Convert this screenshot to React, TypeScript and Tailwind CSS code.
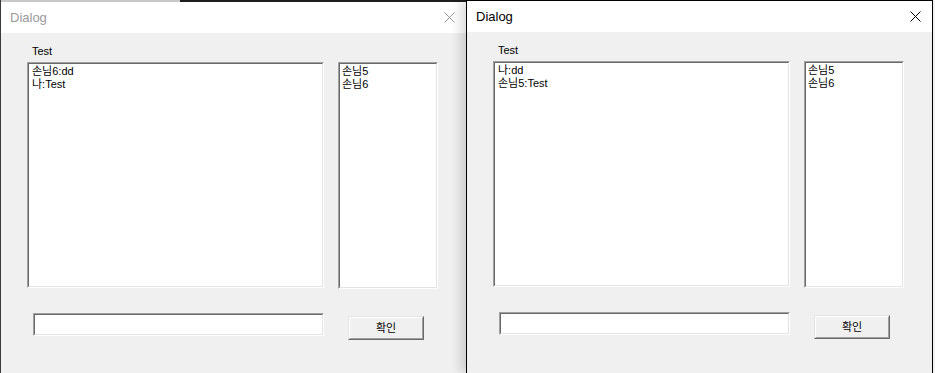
import clsx from 'clsx';

interface DialogWindowProps {
    active: boolean;
    messages: string[];
    guests: string[];
    className?: string;
}

const uiFont = "font-['Liberation_Sans','Noto_Sans_CJK_KR',sans-serif]";

function Sunken({ className, children }: { className?: string; children?: React.ReactNode }) {
    return (
        <div className={clsx('border border-t-[#a0a0a0] border-l-[#a0a0a0] border-b-white border-r-white', className)}>
            <div className="h-full w-full border border-t-[#696969] border-l-[#696969] border-b-[#e3e3e3] border-r-[#e3e3e3] bg-white">
                {children}
            </div>
        </div>
    );
}

function DialogWindow({ active, messages, guests, className }: DialogWindowProps) {
    return (
        <div className={clsx('flex h-[373px] flex-col bg-[#f0f0f0]', uiFont, className)}>
            {/* Title bar */}
            <div className="flex h-[31px] shrink-0 items-center justify-between bg-white pl-[9px] pr-[11px]">
                <span className={clsx('text-[13px] leading-none', active ? 'text-black' : 'text-[#9a9a9a]')}>Dialog</span>
                <svg width="11" height="11" viewBox="0 0 11 11" className={active ? 'text-black' : 'text-[#9a9a9a]'}>
                    <path d="M0.5 0.5 L10.5 10.5 M10.5 0.5 L0.5 10.5" stroke="currentColor" strokeWidth="1" fill="none" />
                </svg>
            </div>

            {/* Client area */}
            <div className="flex flex-1 flex-col text-[11px] leading-[13px] text-black">
                <div className="mt-[12px] pl-[31px]">Test</div>

                <div className="mt-[4px] flex items-start pl-[26px]">
                    <Sunken className="h-[226px] w-[297px]">
                        <div className="pl-[3px] pt-[1px]">
                            {messages.map((m, i) => (
                                <div key={i}>{m}</div>
                            ))}
                        </div>
                    </Sunken>
                    <Sunken className="ml-[14px] h-[227px] w-[100px]">
                        <div className="pl-[2px] pt-[1px]">
                            {guests.map((g, i) => (
                                <div key={i}>{g}</div>
                            ))}
                        </div>
                    </Sunken>
                </div>

                <div className="mt-[24px] flex items-start pl-[32px]">
                    <Sunken className="h-[23px] w-[291px]" />
                    <button className="ml-[24px] mt-[3px] h-[24px] w-[76px] border border-t-[#e3e3e3] border-l-[#e3e3e3] border-b-[#696969] border-r-[#696969] bg-[#f0f0f0] p-0">
                        <div className="flex h-full w-full items-center justify-center border border-t-white border-l-white border-b-[#a0a0a0] border-r-[#a0a0a0]">
                            확인
                        </div>
                    </button>
                </div>
            </div>
        </div>
    );
}

export default function App() {
    return (
        <div className="flex h-[373px] w-[935px] overflow-hidden bg-[#f4f4f4]">
            {/* Inactive window */}
            <div className="flex w-[466px] shrink-0 flex-col border-l border-l-[#3a3a3a]">
                <div className="flex h-[2px] shrink-0">
                    <div className="w-[179px] bg-[#c8c8c8]" />
                    <div className="flex-1 bg-[#1e1e1e]" />
                </div>
                <DialogWindow
                    active={false}
                    messages={['손님6:dd', '나:Test']}
                    guests={['손님5', '손님6']}
                    className="h-[371px]"
                />
            </div>

            {/* Active window */}
            <div className="relative w-[467px] shrink-0 border border-b-0 border-black shadow-[-6px_0_10px_rgba(0,0,0,0.14)]">
                <DialogWindow
                    active
                    messages={['나:dd', '손님5:Test']}
                    guests={['손님5', '손님6']}
                    className="h-[372px]"
                />
            </div>
        </div>
    );
}
